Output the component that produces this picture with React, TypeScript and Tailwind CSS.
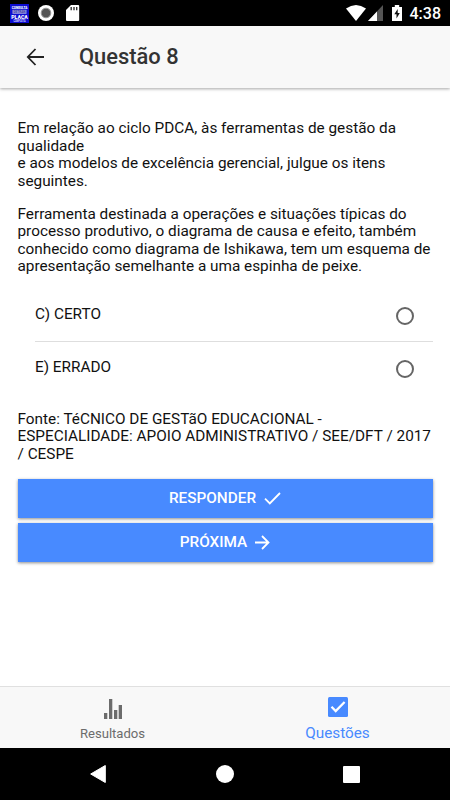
import { useState } from 'react';

const options = [
  { id: 'C', label: 'C) CERTO' },
  { id: 'E', label: 'E) ERRADO' },
];

const AppBadge = () => (
  <svg width="19" height="19" viewBox="0 0 19 19" fontFamily="Roboto, sans-serif" textAnchor="middle" overflow="visible">
    <rect width="19" height="19" fill="#0c0cd0" />
    <text x="9.5" y="5" fontSize="4.4" fontWeight="900" fill="#fff" textLength="15.5" lengthAdjust="spacingAndGlyphs">CONSULTA</text>
    <rect x="2.5" y="5.8" width="14" height="4" fill="#9c9ce0" />
    <text x="9.5" y="9.2" fontSize="3.8" fontWeight="700" fill="#3a3aa8" textLength="12" lengthAdjust="spacingAndGlyphs">DETRAN</text>
    <text x="9.5" y="15" fontSize="6" fontWeight="900" fill="#fff" textLength="16.5" lengthAdjust="spacingAndGlyphs">PLACA</text>
    <text x="9.5" y="18.1" fontSize="2.8" fontWeight="700" fill="#ddf" textLength="12" lengthAdjust="spacingAndGlyphs">COMPLETA</text>
  </svg>
);

const StatusBar = () => (
  <div className="h-[26px] shrink-0 bg-black flex items-center justify-between pl-[10px] pr-[9px] text-white">
    <div className="flex items-center">
      <AppBadge />
      <svg className="ml-[8px]" width="18" height="18" viewBox="0 0 18 18">
        <circle cx="9" cy="9" r="8" fill="#fff" />
        <circle cx="9" cy="9" r="4.8" fill="#555" stroke="#999" strokeWidth="1" />
      </svg>
      <svg className="ml-[11px]" width="14" height="16" viewBox="0 0 14 16">
        <path d="M5 0h7.2Q13.2 0 13.2 1v14q0 1-1 1H1q-1 0-1-1V5z" fill="#fff" />
        <path d="M5.2 2v3.2M8 2v3.2M10.7 2v3.2" stroke="#333" strokeWidth="1.4" />
      </svg>
    </div>
    <div className="flex items-center">
      <svg width="20" height="16" viewBox="0 0 20 16">
        <path d="M0 3.5Q10-3.5 20 3.5L10 16z" fill="#fff" />
      </svg>
      <svg className="ml-[2px]" width="15" height="16" viewBox="0 0 15 16">
        <path d="M15 0v16H0z" fill="#555" />
        <path d="M9 6.4V16H0z" fill="#fff" />
      </svg>
      <svg className="ml-[9px]" width="10" height="16" viewBox="0 0 10 16">
        <path d="M0 2h2.8V0h4.4v2H10v14H0z" fill="#fff" />
        <path d="M5.7 4L2.3 9.2h2.2v4.2L7.8 8H5.7z" fill="#111" />
      </svg>
      <span className="ml-[8px] text-[16px] leading-[20px] font-medium mt-[2px]">4:38</span>
    </div>
  </div>
);

const Header = ({ title }: { title: string }) => (
  <header className="h-[61.5px] shrink-0 bg-[#f8f8f8] flex items-center pl-[26px] relative z-10 shadow-[0_1px_3px_rgba(0,0,0,0.35)]">
    <button aria-label="Voltar">
      <svg width="18" height="18" viewBox="0 0 18 18" fill="none" stroke="#222" strokeWidth="1.8">
        <path d="M9.5 1L1.8 9l7.7 8M1.8 9H18" />
      </svg>
    </button>
    <h1 className="ml-[35px] mt-[2px] text-[21.9px] font-medium text-[#333]">{title}</h1>
  </header>
);

const TabBar = () => (
  <nav className="h-[62px] shrink-0 bg-[#f8f8f8] border-t border-[#e0e0e0] grid grid-cols-2 text-center">
    <div className="flex flex-col items-center text-[#6c6c6c]">
      <svg className="mt-[12px]" width="19" height="20" viewBox="0 0 19 20" fill="currentColor">
        <path d="M1 14h3.3v6H1zM6 0h3.3v20H6zM11 11h3.3v9H11zM15.7 6H19v14h-3.3z" />
      </svg>
      <span className="mt-[6px] text-[13.1px] leading-[18px]">Resultados</span>
    </div>
    <div className="flex flex-col items-center text-[#488aff]">
      <svg className="mt-[9.5px]" width="20" height="20" viewBox="0 0 20 20">
        <rect width="20" height="20" rx="1.5" fill="currentColor" />
        <path d="M3.5 9.7l4.2 4.3L16.6 5" fill="none" stroke="#fff" strokeWidth="2.3" />
      </svg>
      <span className="mt-[7.5px] text-[15.3px] leading-[18px]">Questões</span>
    </div>
  </nav>
);

const NavigationBar = () => (
  <div className="h-[52px] shrink-0 bg-black flex items-center justify-between pl-[90px] pr-[90px]">
    <svg width="16" height="18" viewBox="0 0 16 18">
      <path d="M15.3.5v17L.7 9z" fill="#fff" stroke="#fff" strokeLinejoin="round" />
    </svg>
    <div className="w-[18px] h-[18px] rounded-full bg-white" />
    <div className="w-[17px] h-[17px] rounded-[1px] bg-white" />
  </div>
);

export default function App() {
  const [answer, setAnswer] = useState<string | null>(null);

  return (
    <div className="w-[450px] h-[800px] overflow-hidden bg-white flex flex-col font-[Roboto,sans-serif] antialiased">
      <StatusBar />
      <Header title="Questão 8" />

      <main className="flex-1 min-h-0 px-[17.5px] pt-[32.6px] text-[15.33px] leading-[17.55px] text-[#111]">
        <p className="whitespace-nowrap">
          Em relação ao ciclo PDCA, às ferramentas de gestão da
          <br />
          qualidade
          <br />
          e aos modelos de excelência gerencial, julgue os itens
          <br />
          seguintes.
        </p>
        <p className="mt-[15.3px] whitespace-nowrap">
          Ferramenta destinada a operações e situações típicas do
          <br />
          processo produtivo, o diagrama de causa e efeito, também
          <br />
          conhecido como diagrama de Ishikawa, tem um esquema de
          <br />
          apresentação semelhante a uma espinha de peixe.
        </p>

        <div className="mt-[13.7px] pl-[17.5px]">
          {options.map((option) => (
            <button
              key={option.id}
              onClick={() => setAnswer(option.id)}
              className="w-full h-[52.6px] flex items-center justify-between pr-[19px] border-b border-[#dedede] last:border-b-0"
            >
              <span className="-mt-px">{option.label}</span>
              <span
                className={`w-[18px] h-[18px] mt-[1.5px] rounded-full border-2 ${
                  answer === option.id ? 'border-[#488aff] bg-[#488aff]' : 'border-[#656565]'
                }`}
              />
            </button>
          ))}
        </div>

        <p className="mt-[16px] whitespace-nowrap">
          Fonte: TéCNICO DE GESTãO EDUCACIONAL -
          <br />
          ESPECIALIDADE: APOIO ADMINISTRATIVO / SEE/DFT / 2017
          <br />
          / CESPE
        </p>

        <div className="mt-[15.5px] flex flex-col gap-[4.5px] font-medium text-white">
          <button className="h-[39.4px] flex items-center justify-center bg-[#488aff] shadow-[0_1px_3px_rgba(0,0,0,0.45)]">
            <span className="mt-px">RESPONDER</span>
            <svg className="ml-[8px]" width="17" height="13" viewBox="0 0 17 13" fill="none" stroke="currentColor" strokeWidth="1.8">
              <path d="M1 6.7l4.8 4.7L16 1" />
            </svg>
          </button>
          <button className="h-[39.4px] flex items-center justify-center bg-[#488aff] shadow-[0_1px_3px_rgba(0,0,0,0.45)]">
            PRÓXIMA
            <svg className="ml-[8px]" width="15" height="15" viewBox="0 0 15 15" fill="none" stroke="currentColor" strokeWidth="1.8">
              <path d="M7 1l6.5 6.5L7 14M13.5 7.5H0" />
            </svg>
          </button>
        </div>
      </main>

      <TabBar />
      <NavigationBar />
    </div>
  );
}
